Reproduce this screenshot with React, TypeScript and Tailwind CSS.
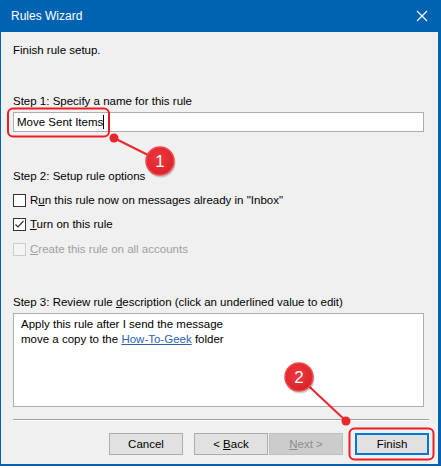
import React from "react";

const font = { fontFamily: '"Liberation Sans", Arial, sans-serif' };

function Check({ checked, disabled, children }: { checked?: boolean; disabled?: boolean; children: React.ReactNode }) {
  return (
    <div className="flex items-center h-[16px]">
      <div
        className={
          "w-[13px] h-[13px] border flex items-center justify-center " +
          (disabled ? "border-[#cccccc] bg-[#f4f4f4]" : "border-[#333333] bg-white")
        }
      >
        {checked && (
          <svg width="11" height="11" viewBox="0 0 11 11">
            <path d="M1.5 5.5 L4 8 L9.5 2" fill="none" stroke="#333" strokeWidth="1.2" />
          </svg>
        )}
      </div>
      <span className={"ml-[4px] " + (disabled ? "text-[#a0a0a0]" : "text-black")}>{children}</span>
    </div>
  );
}

function Btn({ children, variant }: { children: React.ReactNode; variant?: "default" | "disabled" }) {
  const cls =
    variant === "disabled"
      ? "bg-[#cccccc] border-[#bfbfbf] text-[#8c8c8c]"
      : variant === "default"
      ? "bg-[#e1e1e1] border-[#0078d7] border-2 text-black"
      : "bg-[#e1e1e1] border-[#adadad] text-black";
  return (
    <div className={"w-[74px] h-[22px] border flex items-center justify-center " + cls}>{children}</div>
  );
}

function Marker({ cx, cy, label }: { cx: number; cy: number; label: string }) {
  return (
    <g>
      <circle cx={cx + 1} cy={cy + 2} r="14.5" fill="rgba(0,0,0,0.18)" />
      <circle cx={cx} cy={cy} r="14" fill="url(#markerFill)" stroke="#f5474c" strokeWidth="1.5" />
      <text
        x={cx}
        y={cy + 6}
        textAnchor="middle"
        fontSize="17"
        fill="#ffffff"
        style={{ fontFamily: '"Liberation Sans", Arial, sans-serif' }}
      >
        {label}
      </text>
    </g>
  );
}

export default function App() {
  return (
    <div className="relative w-[441px] h-[468px] bg-white text-[11.5px] leading-[16px]" style={font}>
      <div className="h-[466px] flex flex-col bg-[#f0f0f0] border-l border-r-[3px] border-b-2 border-[#0063b1]">
        {/* title bar */}
        <div className="h-[32px] shrink-0 bg-[#0063b1] flex items-center justify-between pl-[10px] pr-[10px] text-white">
          <span className="text-[12px]">Rules Wizard</span>
          <svg width="12" height="12" viewBox="0 0 12 12">
            <path d="M1 1 L11 11 M11 1 L1 11" stroke="#fff" strokeWidth="1.2" />
          </svg>
        </div>

        <div className="flex flex-col pl-[12px]">
          <div className="mt-[10px]">Finish rule setup.</div>

          <div className="mt-[35px]">Step 1: Specify a name for this rule</div>
          <div className="mt-[3px] w-[411px] h-[20px] bg-white border border-[#adadad] flex items-center pl-[3px]">
            <span>Move Sent Items</span>
            <span className="w-px h-[14px] bg-black" />
          </div>

          <div className="mt-[36px]">Step 2: Setup rule options</div>
          <div className="mt-[8px] flex flex-col gap-[8px]">
            <Check>
              R<span className="underline">u</span>n this rule now on messages already in "Inbox"
            </Check>
            <Check checked>
              <span className="underline">T</span>urn on this rule
            </Check>
            <div className="mt-px">
              <Check disabled>
                <span className="underline">C</span>reate this rule on all accounts
              </Check>
            </div>
          </div>

          <div className="mt-[37px]">
            Step 3: Review rule <span className="underline">d</span>escription (click an underlined value to edit)
          </div>
          <div className="mt-[3px] w-[411px] h-[94px] bg-white border border-[#adadad] pl-[7px] pt-[3px] leading-[15px]">
            <div>Apply this rule after I send the message</div>
            <div>
              move a copy to the <span className="underline text-[#2f62ad]">How-To-Geek</span> folder
            </div>
          </div>

          <div className="mt-[12px] w-[416px] border-t border-[#a0a0a0] border-b border-b-white" />

          <div className="mt-[12px] w-[416px] flex justify-end">
            <Btn>Cancel</Btn>
            <div className="ml-[11px]">
              <Btn>
                &lt; <span className="underline ml-[3px]">B</span>ack
              </Btn>
            </div>
            <div className="ml-[1px]">
              <Btn variant="disabled">
                <span className="underline">N</span>ext &gt;
              </Btn>
            </div>
            <div className="ml-[12px]">
              <Btn variant="default">Finish</Btn>
            </div>
          </div>
        </div>
      </div>

      {/* callouts */}
      <svg className="absolute inset-0 pointer-events-none" width="441" height="468" viewBox="0 0 441 468">
        <defs>
          <radialGradient id="markerFill" cx="0.45" cy="0.4" r="0.7">
            <stop offset="0" stopColor="#ec3a3f" />
            <stop offset="1" stopColor="#d61f26" />
          </radialGradient>
        </defs>
        <rect x="8" y="108.5" width="101" height="28" rx="5" fill="none" stroke="#ec1c24" strokeWidth="2" />
        <rect x="349.5" y="428.5" width="84" height="31" rx="5" fill="none" stroke="#ec1c24" strokeWidth="2" />

        <line x1="114" y1="138" x2="160" y2="161" stroke="#e8262c" strokeWidth="2" />
        <circle cx="114" cy="138" r="4.5" fill="#e8262c" />
        <Marker cx={160} cy={161} label="1" />

        <line x1="299" y1="377" x2="346" y2="421" stroke="#e8262c" strokeWidth="2" />
        <circle cx="346" cy="421" r="4.5" fill="#e8262c" />
        <Marker cx={299} cy={377} label="2" />
      </svg>
    </div>
  );
}
